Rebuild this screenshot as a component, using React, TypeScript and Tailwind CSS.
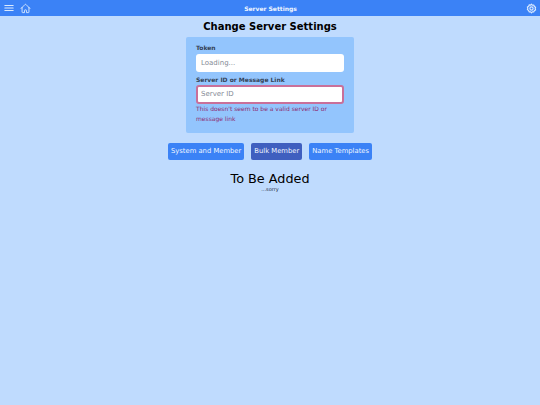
import React from 'react';

const font = { fontFamily: '"DejaVu Sans", sans-serif' };

const tabs = [
  { label: 'System and Member', active: false },
  { label: 'Bulk Member', active: true },
  { label: 'Name Templates', active: false },
];

const App: React.FC = () => {
  return (
    <div style={font} className="min-h-[405px] bg-[#bfdbfe] flex flex-col items-center text-black">
      <header className="w-full h-[16px] bg-[#3b82f6] grid grid-cols-3 items-center pl-[4px] pr-[3px] text-[#dbeafe]">
        <div className="flex items-center gap-[6px]">
          <svg xmlns="http://www.w3.org/2000/svg" fill="none" viewBox="0 0 24 24" strokeWidth={2.500} stroke="currentColor" className="w-[10px] h-[10px]">
            <path strokeLinecap="round" strokeLinejoin="round" d="M2 6h20M2 12h20M2 18h20" />
          </svg>
          <svg xmlns="http://www.w3.org/2000/svg" fill="none" viewBox="0 0 24 24" strokeWidth={2} stroke="currentColor" className="w-[11px] h-[11px]">
            <path strokeLinecap="round" strokeLinejoin="round" d="M2.25 12l8.954-8.955c.44-.439 1.152-.439 1.591 0L21.75 12M4.5 9.75v10.125c0 .621.504 1.125 1.125 1.125H9.75v-4.875c0-.621.504-1.125 1.125-1.125h2.25c.621 0 1.125.504 1.125 1.125V21h4.125c.621 0 1.125-.504 1.125-1.125V9.75" />
          </svg>
        </div>
        <span className="text-[6px] font-bold text-[#eff6ff] text-center">Server Settings</span>
        <svg xmlns="http://www.w3.org/2000/svg" fill="none" viewBox="0 0 24 24" strokeWidth={2.500} stroke="currentColor" className="w-[11px] h-[11px] justify-self-end">
          <path strokeLinecap="round" strokeLinejoin="round" d="M12 2.500l2 2.500 3.200-.4.9 3 2.900 1.500-1 3 1 2.900-2.900 1.500-.9 3-3.200-.4-2 2.400-2-2.400-3.200.4-.9-3L3 14.500l1-3-1-2.900L5.900 7.100l.9-3 3.200.4z" />
          <circle cx="12" cy="12" r="3.500" />
        </svg>
      </header>

      <h1 className="text-[10px] leading-[16px] font-bold mt-[3px]">Change Server Settings</h1>

      <section className="w-[168px] h-[96px] mt-[2px] bg-[#93c5fd] rounded-[2px] px-[10px] pt-[6px]">
        <label className="block text-[6px] leading-[9px] font-bold text-[#334155] mb-[2px]">Token</label>
        <input readOnly placeholder="Loading..." className="block w-full h-[18px] bg-white rounded-[3px] px-[5px] text-[7px] placeholder:text-[#858b96] outline-none" />
        <label className="block text-[6px] leading-[9px] font-bold text-[#334155] mt-[3px] mb-[0.5px]">Server ID or Message Link</label>
        <input readOnly placeholder="Server ID" className="block w-full h-[19px] bg-white rounded-[3px] border-2 border-[#c9709a] px-[3px] text-[7px] placeholder:text-[#858b96] outline-none" />
        <p className="text-[6px] leading-[10px] text-[#8e2a70]">This doesn't seem to be a valid server ID or message link</p>
      </section>

      <nav className="flex gap-[7px] mt-[10px]">
        {tabs.map(t => (
          <button key={t.label} className={`h-[17px] px-[3px] rounded-[2px] text-[6.800px] text-[#eff6ff] ${t.active ? 'bg-[#3f5fbf]' : 'bg-[#3b82f6]'}`}>
            {t.label}
          </button>
        ))}
      </nav>

      <h2 className="text-[12.800px] leading-[16px] mt-[11px]">To Be Added</h2>
      <p className="text-[5px] leading-[6px] -mt-[1px] text-[#1f2937]">...sorry</p>
    </div>
  );
};

export default App;
